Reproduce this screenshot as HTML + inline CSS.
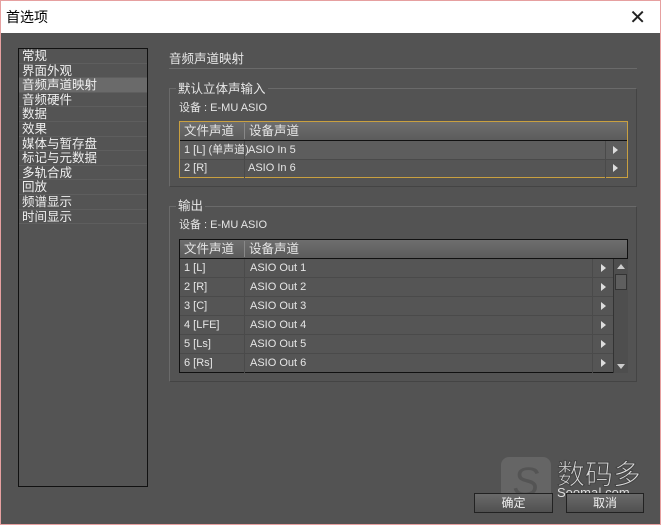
<!DOCTYPE html>
<html><head><meta charset="utf-8"><style>
*{margin:0;padding:0;box-sizing:border-box}
body{width:661px;height:525px;background:#535353;font-family:"Liberation Sans","Noto Sans CJK SC",sans-serif;font-size:12px;color:#e6e6e6;position:relative;overflow:hidden;border:1px solid #e6a0a0}
.abs{position:absolute}
.title{left:0;top:0;width:659px;height:32px;background:#fff;color:#000;font-size:14px;line-height:32px;padding-left:5px}
.close{right:14px;top:4px;color:#222;font-size:20px;font-weight:normal}
.side{left:17px;top:47px;width:130px;height:439px;border:1px solid #111;background:#545454}
.side div{height:14.6px;line-height:14.6px;padding-left:3px;border-bottom:1px solid #5e5e5e;font-size:12.5px;color:#eee}
.side .sel{background:#6a6a6a}
.grp{border:1px solid #6a6a6a;border-right-color:#444;border-bottom-color:#444}
.leg{background:#535353;padding:0 2px;font-size:12.5px}
.tbl{background:#555}
.row{position:absolute;left:0;right:0;height:19px;line-height:19px;border-bottom:1px solid #4a4a4a;font-size:11px}
.row span{position:absolute;left:4px}
.row b{position:absolute;left:70px;font-weight:normal}
.row i{position:absolute;width:0;height:0;border-left:5px solid #ddd;border-top:4px solid transparent;border-bottom:4px solid transparent;top:5px}
.hdr{position:absolute;left:0;right:0;top:0;height:19px;background:linear-gradient(#6e6e6e,#5c5c5c);border-bottom:1px solid #111;font-size:12.5px;line-height:18px}
.btn{height:20px;border:1px solid #222;background:linear-gradient(#6a6a6a,#505050);text-align:center;line-height:18px;color:#eee}
</style></head><body>
<div class="abs title">首选项</div>
<div class="abs close">✕</div>
<div class="abs side">
<div>常规</div><div>界面外观</div><div class="sel">音频声道映射</div><div>音频硬件</div><div>数据</div><div>效果</div><div>媒体与暂存盘</div><div>标记与元数据</div><div>多轨合成</div><div>回放</div><div>频谱显示</div><div>时间显示</div>
</div>
<div class="abs" style="left:168px;top:47px;font-size:12.5px">音频声道映射</div>
<div class="abs" style="left:168px;top:67px;width:468px;height:1px;background:#6a6a6a"></div>

<div class="abs grp" style="left:168px;top:87px;width:468px;height:99px"></div>
<div class="abs leg" style="left:175px;top:77px">默认立体声输入</div>
<div class="abs" style="left:178px;top:98px;font-size:11px">设备 : E-MU ASIO</div>
<div class="abs tbl" style="left:178px;top:120px;width:449px;height:57px;border:1px solid #c9a040">
 <div class="hdr"><span style="position:absolute;left:4px">文件声道</span><span style="position:absolute;left:64px;border-left:1px solid #888;padding-left:4px;top:1px;line-height:16px">设备声道</span></div>
 <div class="row" style="top:19px;background:#5d5d5d"><span>1 [L] (单声道)</span><b style="left:68px">ASIO In 5</b><i style="left:433px"></i></div>
 <div class="row" style="top:37px;border:0"><span>2 [R]</span><b style="left:68px">ASIO In 6</b><i style="left:433px"></i></div>
 <div class="abs" style="left:64px;top:19px;width:1px;height:37px;background:#4a4a4a"></div>
 <div class="abs" style="left:425px;top:19px;width:1px;height:37px;background:#4a4a4a"></div>
</div>

<div class="abs grp" style="left:168px;top:205px;width:468px;height:176px"></div>
<div class="abs leg" style="left:175px;top:194px">输出</div>
<div class="abs" style="left:178px;top:215px;font-size:11px">设备 : E-MU ASIO</div>
<div class="abs tbl" style="left:178px;top:238px;width:449px;height:134px;border:1px solid #111">
 <div class="hdr"><span style="position:absolute;left:4px">文件声道</span><span style="position:absolute;left:64px;border-left:1px solid #888;padding-left:4px;top:1px;line-height:16px">设备声道</span></div>
 <div style="position:absolute;left:0;top:19px;width:433px">
 <div class="row" style="top:0"><span>1 [L]</span><b>ASIO Out 1</b><i style="left:421px"></i></div>
 <div class="row" style="top:19px"><span>2 [R]</span><b>ASIO Out 2</b><i style="left:421px"></i></div>
 <div class="row" style="top:38px"><span>3 [C]</span><b>ASIO Out 3</b><i style="left:421px"></i></div>
 <div class="row" style="top:57px"><span>4 [LFE]</span><b>ASIO Out 4</b><i style="left:421px"></i></div>
 <div class="row" style="top:76px"><span>5 [Ls]</span><b>ASIO Out 5</b><i style="left:421px"></i></div>
 <div class="row" style="top:95px;border:0"><span>6 [Rs]</span><b>ASIO Out 6</b><i style="left:421px"></i></div>
 </div>
 <div class="abs" style="left:64px;top:19px;width:1px;height:114px;background:#4a4a4a"></div>
 <div class="abs" style="left:412px;top:19px;width:1px;height:114px;background:#4a4a4a"></div>
 <div class="abs" style="left:433px;top:19px;width:15px;height:114px;background:#4e4e4e;border-left:1px solid #333">
  <div style="position:absolute;left:3px;top:5px;border-bottom:5px solid #ccc;border-left:4px solid transparent;border-right:4px solid transparent"></div>
  <div style="position:absolute;left:1px;top:15px;width:12px;height:16px;background:#5e5e5e;border:1px solid #333"></div>
  <div style="position:absolute;left:3px;bottom:4px;border-top:5px solid #ccc;border-left:4px solid transparent;border-right:4px solid transparent"></div>
 </div>
</div>

<div class="abs" style="left:500px;top:456px;width:50px;height:50px;border-radius:8px;background:rgba(120,120,120,.5);color:rgba(80,80,80,.8);font-size:40px;text-align:center;line-height:50px;font-style:italic">S</div>
<div class="abs" style="left:556px;top:452px;font-size:28px;color:#ddd;-webkit-text-stroke:1px #444">数码多</div>
<div class="abs" style="left:556px;top:484px;font-size:13px;color:#ddd">Sooma|.com</div>
<div class="abs btn" style="left:473px;top:492px;width:79px">确定</div>
<div class="abs btn" style="left:565px;top:492px;width:78px">取消</div>
</body></html>
